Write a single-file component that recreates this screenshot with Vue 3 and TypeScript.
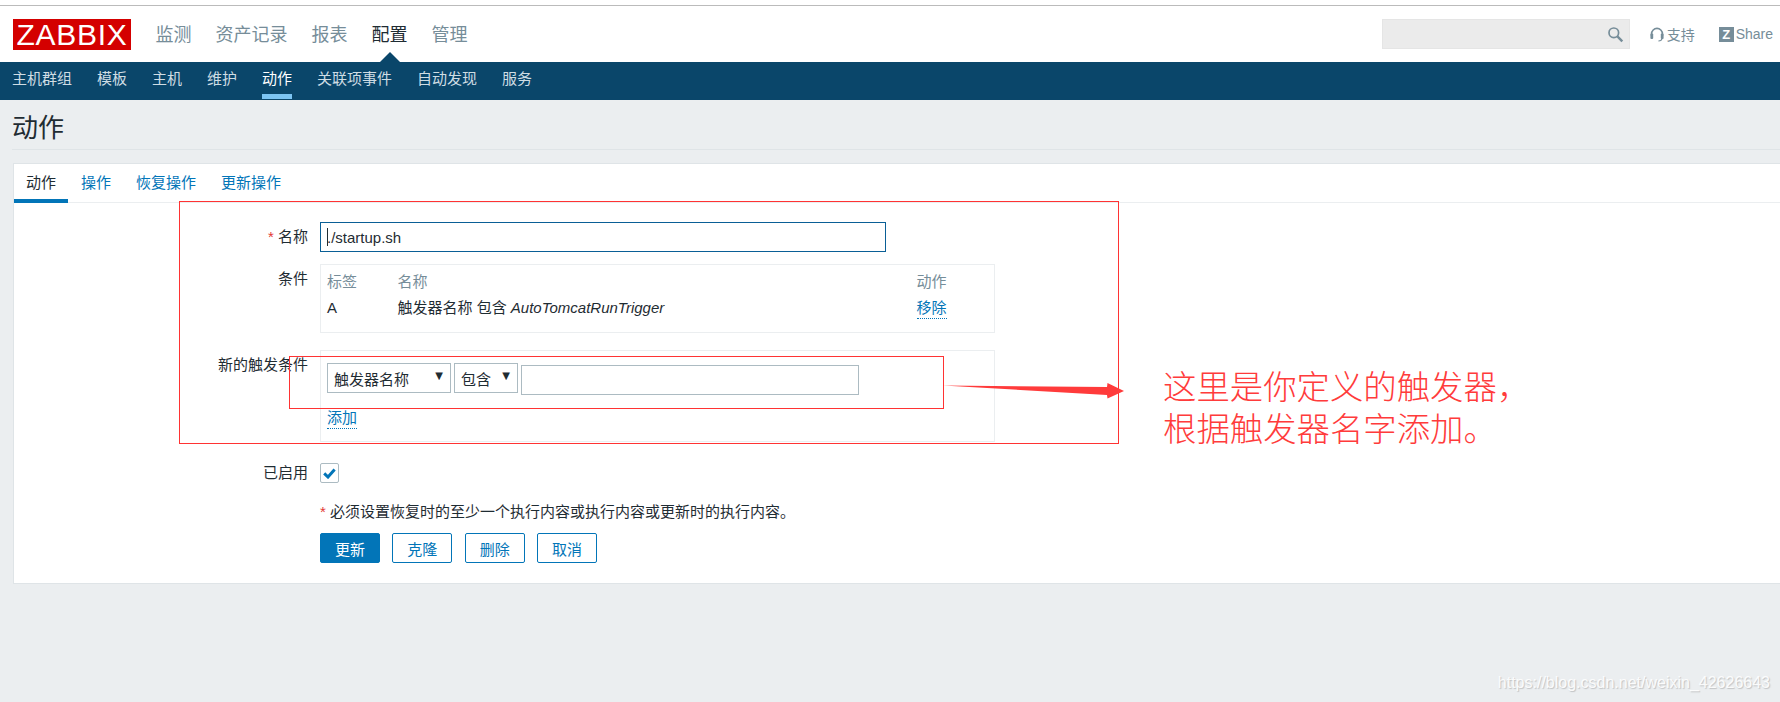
<script setup lang="ts">
const mainNav: { label: string; active?: boolean }[] = [
  { label: '监测' },
  { label: '资产记录' },
  { label: '报表' },
  { label: '配置', active: true },
  { label: '管理' },
]
const subNav: { label: string; active?: boolean }[] = [
  { label: '主机群组' },
  { label: '模板' },
  { label: '主机' },
  { label: '维护' },
  { label: '动作', active: true },
  { label: '关联项事件' },
  { label: '自动发现' },
  { label: '服务' },
]
const tabs: { label: string; active?: boolean }[] = [
  { label: '动作', active: true },
  { label: '操作' },
  { label: '恢复操作' },
  { label: '更新操作' },
]
const secondary: string[] = ['克隆', '删除', '取消']
</script>

<template>
  <div class="page">
    <header class="header">
      <div class="logo">ZABBIX</div>
      <nav class="main-nav">
        <a v-for="n in mainNav" :key="n.label" class="main-item" :class="{ on: n.active }">{{ n.label }}</a>
      </nav>
      <div class="tools">
        <div class="search">
          <svg width="17" height="17" viewBox="0 0 17 17" fill="none" stroke="#768d99">
            <circle cx="6.8" cy="6.8" r="4.8" stroke-width="1.7" />
            <path d="M10.4 10.4 L15.3 15.3" stroke-width="2.4" />
          </svg>
        </div>
        <a class="tool support">
          <svg width="14" height="15" viewBox="0 0 14 15" fill="none">
            <path d="M1.6 9 V6.8 a5.4 5.4 0 0 1 10.8 0 V9" stroke="#768d99" stroke-width="1.6" />
            <rect x="0.4" y="6.6" width="2.8" height="5.4" rx="1" fill="#768d99" />
            <rect x="10.8" y="6.6" width="2.8" height="5.4" rx="1" fill="#768d99" />
            <path d="M12 11.5 C11.8 13.4 10.4 14 8.4 14" stroke="#768d99" stroke-width="1.2" />
          </svg>
          <span>支持</span>
        </a>
        <a class="tool share"><span class="z">Z</span><span>Share</span></a>
      </div>
    </header>

    <nav class="sub-nav">
      <a v-for="n in subNav" :key="n.label" class="sub-item" :class="{ on: n.active }">{{ n.label }}</a>
    </nav>

    <main class="content">
      <h1 class="title">动作</h1>
      <section class="card">
        <div class="tabs">
          <a v-for="t in tabs" :key="t.label" class="tab" :class="{ on: t.active }">{{ t.label }}</a>
        </div>
        <form class="form" @submit.prevent>
          <div class="row r-name">
            <label class="lab"><span class="star">*</span> 名称</label>
            <div class="field name-field">
              <input class="name-input" type="text" value="./startup.sh" readonly />
              <i class="caret"></i>
            </div>
          </div>
          <div class="row r-cond">
            <label class="lab">条件</label>
            <div class="box cond-box">
              <div class="cond-grid">
                <span class="th">标签</span><span class="th">名称</span><span class="th">动作</span>
                <span>A</span>
                <span>触发器名称 包含 <em>AutoTomcatRunTrigger</em></span>
                <span><a class="dotted">移除</a></span>
              </div>
            </div>
          </div>
          <div class="row r-new">
            <label class="lab">新的触发条件</label>
            <div class="box new-box">
              <div class="controls">
                <div class="select s1"><span>触发器名称</span><b>▼</b></div>
                <div class="select s2"><span>包含</span><b>▼</b></div>
                <input class="text-input" type="text" readonly />
              </div>
              <a class="dotted add">添加</a>
            </div>
          </div>
          <div class="row r-enabled">
            <label class="lab">已启用</label>
            <span class="check">
              <svg width="13" height="11" viewBox="0 0 13 11">
                <path d="M1.2 5.4 L5 9 L11.6 1.6" fill="none" stroke="#0275b8" stroke-width="3" />
              </svg>
            </span>
          </div>
          <div class="note"><span class="star">*</span> 必须设置恢复时的至少一个执行内容或执行内容或更新时的执行内容。</div>
          <div class="buttons">
            <button class="btn primary" type="button">更新</button>
            <button v-for="b in secondary" :key="b" class="btn" type="button">{{ b }}</button>
          </div>
        </form>
      </section>
    </main>

    <div class="mark big"></div>
    <div class="mark small"></div>
    <svg class="arrow" width="190" height="24" viewBox="0 0 190 24">
      <polygon points="0,4.500 164,6 164.500,2 181,10 164.500,17.500 164,14" fill="#ff3b3b" />
    </svg>
    <div class="note-red">这里是你定义的触发器，<br />根据触发器名字添加。</div>
    <div class="watermark">https://blog.csdn.net/weixin_42626643</div>
  </div>
</template>

<style>
html, body { margin: 0; background: #ebeef0; }
</style>

<style scoped>
.page {
  position: relative;
  height: 702px;
  overflow: hidden;
  background: #ebeef0;
  color: #1f2c33;
  font-family: "Liberation Sans", "Noto Sans CJK SC", sans-serif;
  font-size: 15px;
}
.header {
  box-sizing: border-box;
  display: flex;
  align-items: flex-start;
  background: #fff;
  border-top: 1px solid #bbb;
  margin-top: 5px;
  height: 57px;
  box-shadow: 0 -5px 0 #fff;
  padding: 13px 0 0 13px;
  position: relative;
}
.logo {
  width: 118px;
  height: 31px;
  background: #d40000;
  color: #fff;
  font-size: 30px;
  line-height: 32px;
  text-align: center;
  letter-spacing: 0.7px;
}
.main-nav {
  display: flex;
  gap: 24px;
  margin-left: 24.500px;
  height: 31px;
}
.main-item {
  position: relative;
  font-size: 18px;
  line-height: 32px;
  color: #768d99;
}
.main-item.on { color: #1f2c33; }
.main-item.on::after {
  content: "";
  position: absolute;
  left: 8px;
  top: 33px;
  border: 10px solid transparent;
  border-top: 0;
  border-bottom-color: #0a466a;
}
.tools {
  margin-left: auto;
  display: flex;
  align-items: center;
  height: 30px;
}
.search {
  box-sizing: border-box;
  width: 248px;
  height: 30px;
  background: #ebebeb;
  border: 1px solid #e5e5e5;
  display: flex;
  align-items: center;
  justify-content: flex-end;
  padding-right: 5px;
}
.tool {
  display: flex;
  align-items: center;
  color: #768d99;
  font-size: 14px;
}
.support { margin-left: 20px; gap: 3px; }
.share { margin-left: 24px; margin-right: 7px; gap: 2px; }
.z {
  width: 15px;
  height: 15px;
  background: #768d99;
  color: #fff;
  font-weight: bold;
  font-size: 13px;
  line-height: 15px;
  text-align: center;
}
.sub-nav {
  box-sizing: border-box;
  height: 38px;
  display: flex;
  gap: 25px;
  padding-left: 12px;
  background: #0a466a;
}
.sub-item {
  box-sizing: border-box;
  height: 37px;
  line-height: 34px;
  color: #cfdde4;
  font-size: 15px;
}
.sub-item.on {
  color: #fff;
  border-bottom: 5px solid #7cc4f2;
}
.content { padding: 0 0 0 12px; }
.title {
  margin: 0;
  height: 50px;
  box-sizing: border-box;
  border-bottom: 1px solid #dfe4e7;
  font-size: 26px;
  font-weight: 400;
  line-height: 56px;
}
.card {
  margin-top: 13px;
  margin-left: 1px;
  background: #fff;
  border: 1px solid #dfe4e7;
  border-right: 0;
  height: 421px;
  box-sizing: border-box;
}
.tabs {
  display: flex;
  height: 39px;
  box-sizing: border-box;
  border-bottom: 1px solid #ebeef0;
}
.tab {
  box-sizing: border-box;
  height: 39px;
  padding: 0 12px;
  line-height: 38px;
  color: #0275b8;
  margin-left: 1px;
}
.tab.on {
  color: #1f2c33;
  margin-left: 0;
  border-bottom: 4px solid #0275b8;
}
.form { padding-top: 19px; }
.row { display: flex; align-items: flex-start; }
.lab {
  box-sizing: border-box;
  flex: none;
  width: 294px;
  margin-right: 12px;
  text-align: right;
  line-height: 30px;
}
.star { color: #e33734; }
.field { position: relative; }
input { font-family: inherit; outline: none; }
.name-input {
  display: block;
  box-sizing: border-box;
  width: 566px;
  height: 30px;
  padding: 0 6px;
  border: 1px solid #0a5f96;
  color: #1f2c33;
  font-size: 15px;
}
.caret {
  position: absolute;
  left: 7px;
  top: 6px;
  width: 1px;
  height: 18px;
  background: #1f2c33;
}
.box {
  box-sizing: border-box;
  width: 675px;
  border: 1px solid #ebeef0;
}
.r-cond { margin-top: 12px; }
.cond-box { height: 69px; padding: 4px 0 0 6px; }
.cond-grid {
  display: grid;
  grid-template-columns: 70.5px 519px auto;
  grid-auto-rows: 26px;
  line-height: 26px;
  align-items: start;
}
.th { color: #768d99; }
.dotted {
  display: inline-block;
  color: #0275b8;
  border-bottom: 1px dotted #0275b8;
  line-height: 20px;
}
.r-new { margin-top: 17px; }
.new-box { height: 92px; padding: 12px 0 0 6px; }
.controls { display: flex; align-items: flex-start; height: 32px; }
.select {
  box-sizing: border-box;
  height: 30px;
  display: flex;
  justify-content: space-between;
  align-items: center;
  padding: 0 7px 0 6px;
  border: 1px solid #acbbc2;
}
.select b {
  font-family: "DejaVu Sans", sans-serif;
  font-weight: 400;
  font-size: 10px;
  line-height: 1;
  margin-top: -5px;
  color: #1f2c33;
}
.s1 { width: 124px; }
.s2 { width: 64px; margin-left: 3px; }
.text-input {
  box-sizing: border-box;
  margin: 2px 0 0 3px;
  width: 338px;
  height: 30px;
  border: 1px solid #acbbc2;
}
.add { margin-top: 13px; }
.r-enabled { margin-top: 21px; height: 20px; }
.r-enabled .lab { line-height: 20px; }
.check {
  box-sizing: border-box;
  width: 19px;
  height: 20px;
  border: 1px solid #acbbc2;
  border-radius: 2px;
  display: flex;
  align-items: center;
  justify-content: center;
}
.note {
  margin: 20px 0 0 306px;
  line-height: 18px;
}
.buttons {
  display: flex;
  gap: 12.340px;
  margin: 12px 0 0 306px;
}
.btn {
  box-sizing: border-box;
  width: 60px;
  height: 30px;
  padding: 0;
  font-family: inherit;
  font-size: 15px;
  color: #0275b8;
  background: #fff;
  border: 1px solid #0275b8;
  border-radius: 2px;
}
.btn.primary { color: #fff; background: #0275b8; }
.mark {
  position: absolute;
  box-sizing: border-box;
  border: 1px solid #f33;
  pointer-events: none;
}
.big { left: 179px; top: 201px; width: 940px; height: 243px; }
.small { left: 289px; top: 356px; width: 655px; height: 53px; }
.arrow { position: absolute; left: 943px; top: 381px; }
.note-red {
  position: absolute;
  left: 1163px;
  top: 367px;
  color: #ff3b3b;
  font-family: "Liberation Serif", "Noto Sans CJK SC", serif;
  font-size: 33.400px;
  font-weight: 300;
  line-height: 42px;
  white-space: nowrap;
}
.watermark {
  position: absolute;
  right: 10px;
  top: 674px;
  font-size: 16px;
  line-height: 18px;
  color: rgba(255, 255, 255, 0.9);
  text-shadow: 1px 1px 1px rgba(130, 130, 130, 0.4);
}
</style>
